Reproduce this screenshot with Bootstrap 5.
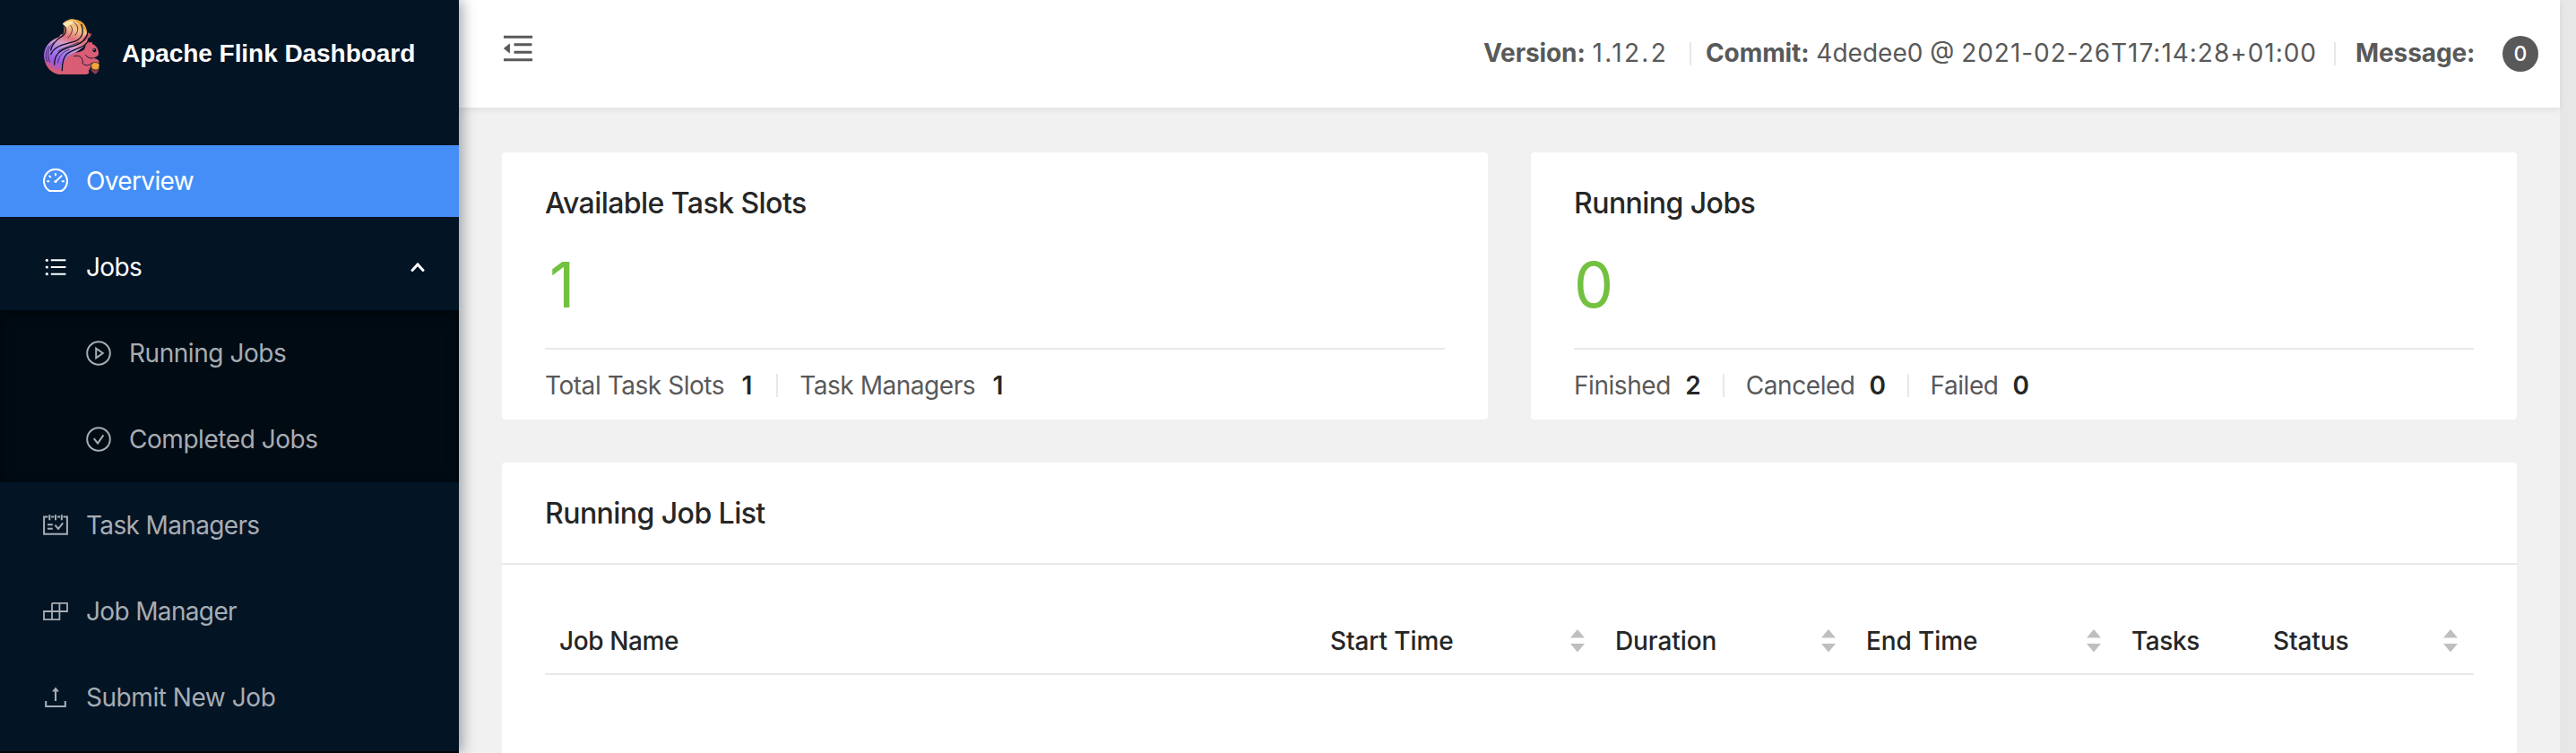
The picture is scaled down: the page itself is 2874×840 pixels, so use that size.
<!DOCTYPE html>
<html lang="en">
<head>
<meta charset="utf-8">
<meta name="viewport" content="width=device-width, initial-scale=1">
<title>Apache Flink Dashboard</title>
<link href="https://cdn.jsdelivr.net/npm/bootstrap@5.3.0/dist/css/bootstrap.min.css" rel="stylesheet">
<style>
  body { font-family: Inter, "Liberation Sans", sans-serif; font-size: 28px; line-height: 44px; letter-spacing: -.45px; color: #262626; background: #f1f1f1; height: 840px; overflow: hidden; }
  svg { display: block; flex: none; fill: currentColor; }
  .sidebar { width: 512px; height: 840px; background: #031425; border-bottom: 2px solid #000509; box-shadow: 4px 0 14px rgba(3,20,37,.36); z-index: 3; flex: none; color: #a7adb3; }
  .brand { height: 128px; padding: 20px 0 0 48px; gap: 24px; flex: none; }
  .brand-name { font: 700 28px/44px "Liberation Sans", Arial, sans-serif; letter-spacing: -.05px; color: #fff; margin-top: 18px; }
  .side-nav { padding-top: 34px; }
  .side-nav .nav-link { height: 80px; flex: none; padding: 0 38px 0 48px; margin-bottom: 16px; color: #a7adb3; gap: 20px; }
  .side-nav .nav-link.active { background: #458ef7; color: #fff; }
  .side-nav .nav-link.open { color: #fff; margin-bottom: 8px; }
  .side-nav .snug { letter-spacing: -.65px; }
  .sub-menu { background: #010b14; height: 192px; flex: none; padding-top: 8px; margin-bottom: 8px; box-shadow: inset 0 4px 16px rgba(0,0,0,.45); }
  .side-nav .sub-menu .nav-link { padding-left: 96px; }
  .scroll-track { width: 18px; background: #e7e7e7; flex: none; }
  .topbar { height: 120px; flex: none; background: #fff; padding: 0 24px 0 48px; color: #595959; box-shadow: 0 2px 8px rgba(0,21,41,.08); z-index: 2; position: relative; letter-spacing: 0; }
  .topbar b { font-weight: 700; letter-spacing: -.1px; }
  .topbar .release { letter-spacing: 2.3px; }
  .topbar .stamp { letter-spacing: .97px; }
  .fold { margin-top: -12px; }
  .sep { width: 2px; height: 26px; background: #e8e8e8; flex: none; }
  .count { width: 40px; height: 40px; border-radius: 50%; background: #595959; color: #fff; font-size: 23px; font-weight: 500; letter-spacing: 0; }
  .version { width: 230px; } .commit { width: 717px; padding-left: 16px; } .message { width: 186px; padding-left: 22px; }
  .version, .commit, .message { margin-top: -2px; }
  .content { padding: 50px 48px 0; flex: none; }
  .panel { background: #fff; border: 0; border-radius: 4px; color: #262626; }
  .stat { height: 298px; padding: 35px 48px 0; }
  .stat h2, .list-head { font-size: 32px; font-weight: 500; line-height: 44px; letter-spacing: -.55px; margin: 0; }
  .figure-no { font-size: 70px; line-height: 80px; padding-top: 29px; height: 139px; flex: none; color: #73c140; letter-spacing: 0; }
  .figure-one { padding-left: 5px; }
  .stat-foot { border-top: 2px solid #e8e8e8; height: 82px; flex: none; color: #595959; }
  .stat-foot b { font-weight: 600; color: #262626; width: 18px; text-align: center; margin-left: 16px; }
  .stat-foot .sep { margin: 0 24px; }
  .list-panel { margin-top: 48px; height: 340px; }
  .list-head { height: 114px; flex: none; padding: 35px 48px 0; border-bottom: 2px solid #e8e8e8; }
  .list-body { padding: 48px 48px 0; }
  .jobs-table { table-layout: fixed; margin: 0; }
  .jobs-table > thead > tr > th { height: 74px; padding: 0 18px 0 16px; border-bottom: 2px solid #e8e8e8; font-weight: 500; vertical-align: middle; color: #262626; letter-spacing: -.1px; }
  .jobs-table > thead > tr > th.snug { letter-spacing: -.4px; }
  .sorter { color: #bfbfbf; }
</style>
</head>
<body class="d-flex">

<aside class="sidebar d-flex flex-column position-relative">
  <div class="brand d-flex align-items-start">
    <svg width="64" height="64" viewBox="24 30 192 192" aria-hidden="true">
      <defs>
        <linearGradient id="tail" x1=".62" y1="0" x2=".3" y2="1">
          <stop offset="0" stop-color="#f4b656"/><stop offset=".16" stop-color="#f5c08a"/><stop offset=".34" stop-color="#e0707c"/><stop offset=".46" stop-color="#d79cc8"/><stop offset=".62" stop-color="#a87bf0"/><stop offset=".8" stop-color="#9a5be0"/><stop offset="1" stop-color="#d95a78"/>
        </linearGradient>
      </defs>
      <path fill="url(#tail)" d="M88 52C98 38 118 30 134 36C158 40 168 54 172 84L178 78L176 88L186 84C182 92 180 96 174 100C172 124 150 134 124 152C104 166 96 186 96 218H76C48 212 28 186 27 156C28 126 48 104 78 94L84 84L90 86C96 78 98 62 88 52Z"/>
      <path fill="#f8e6b0" d="M89 52C106 36 132 38 148 50C128 46 112 50 106 60C100 60 94 58 89 52Z"/>
      <path fill="#ed9f3a" d="M134 36C158 40 170 56 172 84C164 66 150 50 134 44Z"/>
      <path fill="#c9586e" d="M172 84L186 82C182 94 176 102 164 108C150 112 152 98 172 84Z"/>
      <path fill="#d85d75" d="M29 168C42 196 62 204 88 204C88 180 100 160 122 150C138 142 152 148 164 132C166 120 172 114 174 106L179 114C183 108 188 108 190 118C204 124 211 136 210 152C206 160 198 162 190 165C204 164 213 172 212 180L188 186L176 208C180 212 178 219 168 219H78C50 214 34 196 29 168Z"/>
      <g fill="none" stroke="#071221" stroke-width="3.8" stroke-linecap="round">
        <path d="M88 52C106 64 104 82 84 94M84 94C66 106 54 118 50 138M152 52C164 82 152 102 126 110C96 118 62 124 50 152M173 80C170 108 144 120 112 128C80 138 62 152 62 186M178 98C172 130 130 130 104 150C90 164 88 184 88 206"/>
      </g>
      <g fill="none" stroke="#2a1c3c" stroke-width="2.400" stroke-linecap="round">
        <path d="M126 44C142 52 146 72 132 88M116 56C128 66 120 84 108 96M60 112C42 126 36 150 46 178M44 124C32 140 32 162 38 176M142 112C124 122 96 126 74 142M112 136C92 142 76 156 74 180"/>
      </g>
      <path d="M128 158C146 152 160 164 156 182C168 192 180 190 188 180M190 165C180 166 172 162 166 154" fill="none" stroke="#071221" stroke-width="2.600" stroke-linecap="round"/>
      <ellipse cx="196" cy="138" rx="6" ry="6.500" fill="#071221"/><circle cx="195" cy="136" r="2.500" fill="#8fa5b0"/>
      <path fill="#8d3d4c" d="M184 198C196 204 204 204 212 198C212 208 206 212 200 218C190 214 184 208 184 198Z"/>
      <path fill="#f0a63c" stroke="#071221" stroke-width="2" d="M186 198C182 182 192 176 206 180C215 180 214 192 210 202C202 206 192 204 186 198Z"/>
    </svg>
    <div class="brand-name text-nowrap">Apache Flink Dashboard</div>
  </div>

  <nav class="side-nav nav flex-column flex-nowrap">
    <a class="nav-link active d-flex align-items-center">
      <svg width="28" height="28" viewBox="0 0 28 28" stroke="currentColor"><g fill="none"><path stroke-width="2.1" d="M7.2 25A13 13 0 1 1 20.8 25Z"/><path stroke-width="1.9" d="M14 5V8.2M6.700 7.800L8.800 9.900M4.200 14.300H7.200M20.800 14.300H23.800M14.300 14.200L21.200 7.600"/></g><circle cx="14" cy="14.5" r="1.6" stroke="none"/></svg>
      <span class="snug">Overview</span>
    </a>
    <a class="nav-link open d-flex align-items-center">
      <svg width="28" height="28" viewBox="0 0 28 28"><path d="M8.800 5.300H25.400V7.300H8.800zM8.800 13H25.400V15H8.800zM8.800 20.700H25.400V22.700H8.800z"/><circle cx="4.3" cy="6.3" r="1.6"/><circle cx="4.3" cy="14" r="1.6"/><circle cx="4.3" cy="21.7" r="1.6"/></svg>
      <span class="snug">Jobs</span>
      <svg class="ms-auto" width="16" height="12" viewBox="0 0 16 12"><path d="M2 9.500L8 3L14 9.500" fill="none" stroke="currentColor" stroke-width="3" stroke-linecap="round"/></svg>
    </a>
    <div class="sub-menu nav flex-column flex-nowrap">
      <a class="nav-link d-flex align-items-center">
        <svg width="28" height="28" viewBox="0 0 28 28"><g fill="none" stroke="currentColor" stroke-width="2"><circle cx="14" cy="14" r="12.8"/><path d="M11.200 8.600V19.400L18.800 14Z"/></g></svg>
        <span>Running Jobs</span>
      </a>
      <a class="nav-link d-flex align-items-center">
        <svg width="28" height="28" viewBox="0 0 28 28"><g fill="none" stroke="currentColor" stroke-width="2"><circle cx="14" cy="14" r="12.8"/><path d="M8.800 13.200L13 18.600L19.400 9.400"/></g></svg>
        <span>Completed Jobs</span>
      </a>
    </div>
    <a class="nav-link d-flex align-items-center">
      <svg width="28" height="28" viewBox="0 0 28 28"><g fill="none" stroke="currentColor" stroke-width="2"><path d="M5.500 4.600H1.100V23.800H26.900V4.600H22.500M9.200 4.600H12.200M16 4.600H19M7.300 2.200V8.200M14 2.200V8.200M20.800 2.200V8.200M5 13.200H10.800M5 17.800H10.800M13.400 13.600L17 18L22.200 11.400"/></g></svg>
      <span class="snug">Task Managers</span>
    </a>
    <a class="nav-link d-flex align-items-center">
      <svg width="28" height="28" viewBox="0 0 28 28"><path d="M10 4.800H27V14H1V23.200H18.400V4.800M10 4.800V23.200" fill="none" stroke="currentColor" stroke-width="1.8"/></svg>
      <span class="snug">Job Manager</span>
    </a>
    <a class="nav-link d-flex align-items-center">
      <svg width="28" height="28" viewBox="0 0 28 28"><path d="M3.200 18V24H24.800V18M14 6V18" fill="none" stroke="currentColor" stroke-width="2.1"/><path d="M14 2.400L18 7.400H10Z"/></svg>
      <span>Submit New Job</span>
    </a>
  </nav>
</aside>

<main class="flex-grow-1 d-flex flex-column">
  <header class="topbar d-flex align-items-center">
    <svg class="fold" width="36" height="36" viewBox="64 64 896 896"><path d="M408 442h480c4.400 0 8-3.600 8-8v-56c0-4.400-3.600-8-8-8H408c-4.400 0-8 3.600-8 8v56c0 4.400 3.600 8 8 8zm-8 204c0 4.400 3.600 8 8 8h480c4.400 0 8-3.600 8-8v-56c0-4.400-3.600-8-8-8H408c-4.400 0-8 3.600-8 8v56zm504-486H120c-4.400 0-8 3.600-8 8v56c0 4.400 3.600 8 8 8h784c4.400 0 8-3.600 8-8v-56c0-4.400-3.600-8-8-8zm0 632H120c-4.400 0-8 3.600-8 8v56c0 4.400 3.600 8 8 8h784c4.400 0 8-3.600 8-8v-56c0-4.400-3.600-8-8-8zM115.400 518.900L271.700 642c5.800 4.600 14.400.5 14.400-6.900V388.900c0-7.400-8.500-11.500-14.400-6.900L115.400 505.100a8.740 8.740 0 0 0 0 13.800z"/></svg>
    <div class="ms-auto d-flex align-items-center text-nowrap">
      <div class="version"><b>Version:</b> <span class="release">1.12.2</span></div>
      <div class="sep"></div>
      <div class="commit"><b>Commit:</b> 4dedee0 @ <span class="stamp">2021-02-26T17:14:28+01:00</span></div>
      <div class="sep"></div>
      <div class="message"><b>Message:</b></div>
      <div class="count d-flex align-items-center justify-content-center">0</div>
    </div>
  </header>

  <div class="content">
    <div class="row gx-5">
      <div class="col-6">
        <section class="card panel stat">
          <h2>Available Task Slots</h2>
          <div class="figure-no figure-one">1</div>
          <div class="stat-foot d-flex align-items-center">
            <span>Total Task Slots</span><b>1</b><div class="sep"></div>
            <span>Task Managers</span><b>1</b>
          </div>
        </section>
      </div>
      <div class="col-6">
        <section class="card panel stat">
          <h2>Running Jobs</h2>
          <div class="figure-no">0</div>
          <div class="stat-foot d-flex align-items-center">
            <span>Finished</span><b>2</b><div class="sep"></div>
            <span>Canceled</span><b>0</b><div class="sep"></div>
            <span>Failed</span><b>0</b>
          </div>
        </section>
      </div>
    </div>

    <section class="card panel list-panel">
      <div class="list-head">Running Job List</div>
      <div class="list-body">
        <table class="table table-borderless jobs-table">
          <colgroup><col width="860"><col width="318"><col width="280"><col width="296"><col width="158"><col width="240"></colgroup>
          <thead><tr>
            <th class="snug">Job Name</th>
            <th><div class="d-flex align-items-center justify-content-between">Start Time<svg class="sorter" width="16" height="26" viewBox="0 0 16 26"><path d="M8 0L16 9.500H0zM0 16H16L8 25.500z"/></svg></div></th>
            <th><div class="d-flex align-items-center justify-content-between">Duration<svg class="sorter" width="16" height="26" viewBox="0 0 16 26"><path d="M8 0L16 9.500H0zM0 16H16L8 25.500z"/></svg></div></th>
            <th><div class="d-flex align-items-center justify-content-between">End Time<svg class="sorter" width="16" height="26" viewBox="0 0 16 26"><path d="M8 0L16 9.500H0zM0 16H16L8 25.500z"/></svg></div></th>
            <th class="snug">Tasks</th>
            <th><div class="d-flex align-items-center justify-content-between">Status<svg class="sorter" width="16" height="26" viewBox="0 0 16 26"><path d="M8 0L16 9.500H0zM0 16H16L8 25.500z"/></svg></div></th>
          </tr></thead>
        </table>
      </div>
    </section>
  </div>
</main>
<div class="scroll-track"></div>

<script src="https://cdn.jsdelivr.net/npm/bootstrap@5.3.0/dist/js/bootstrap.bundle.min.js"></script>
</body>
</html>
